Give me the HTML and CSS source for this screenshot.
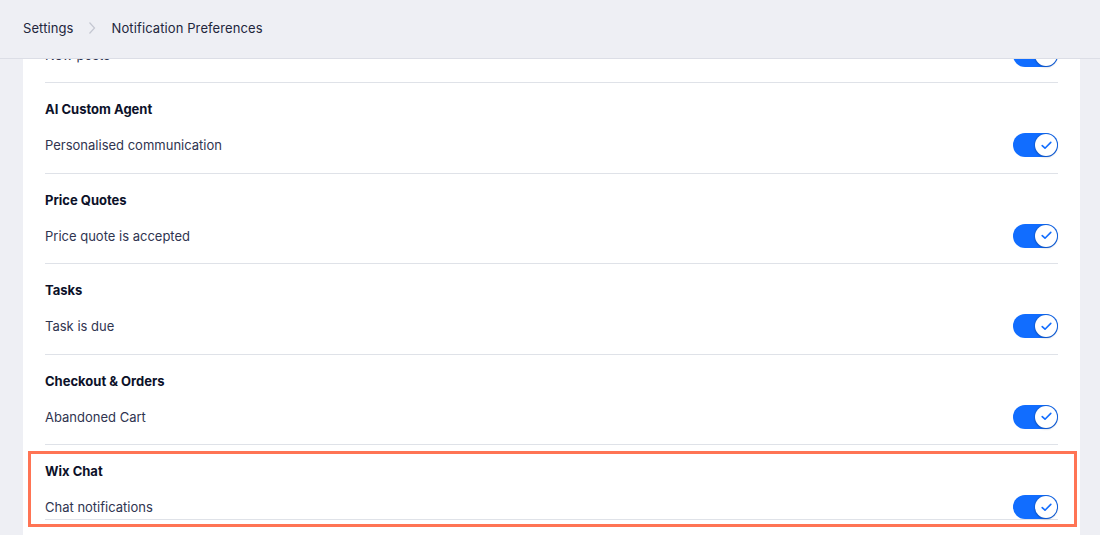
FILE: index.html
```html
<!DOCTYPE html>
<html lang="en">
<head>
<meta charset="utf-8">
<title>Notification Preferences</title>
<link rel="stylesheet" href="styles.css">
</head>
<body>
<header class="header">
  <span class="crumb">Settings</span>
  <svg class="chev" width="8" height="14" viewBox="0 0 8 14"><path d="M1.5 1.5 L6.5 7 L1.5 12.5" fill="none" stroke="#c4c7d1" stroke-width="1.2"/></svg>
  <span class="crumb current">Notification Preferences</span>
</header>
<main class="main">
  <div class="card">
    <div class="list">
      <section class="group">
        <h3 class="title">Blog</h3>
        <div class="row"><span class="label">New posts</span><span class="toggle"><span class="knob"><svg width="11" height="9" viewBox="0 0 11 9"><path d="M1.2 4.6 L4 7.2 L9.8 1.4" fill="none" stroke="#116dff" stroke-width="1.6" stroke-linecap="round" stroke-linejoin="round"/></svg></span></span></div>
      </section>
      <section class="group">
        <h3 class="title">AI Custom Agent</h3>
        <div class="row"><span class="label">Personalised communication</span><span class="toggle"><span class="knob"><svg width="11" height="9" viewBox="0 0 11 9"><path d="M1.2 4.6 L4 7.2 L9.8 1.4" fill="none" stroke="#116dff" stroke-width="1.6" stroke-linecap="round" stroke-linejoin="round"/></svg></span></span></div>
      </section>
      <section class="group">
        <h3 class="title">Price Quotes</h3>
        <div class="row"><span class="label">Price quote is accepted</span><span class="toggle"><span class="knob"><svg width="11" height="9" viewBox="0 0 11 9"><path d="M1.2 4.6 L4 7.2 L9.8 1.4" fill="none" stroke="#116dff" stroke-width="1.6" stroke-linecap="round" stroke-linejoin="round"/></svg></span></span></div>
      </section>
      <section class="group">
        <h3 class="title">Tasks</h3>
        <div class="row"><span class="label">Task is due</span><span class="toggle"><span class="knob"><svg width="11" height="9" viewBox="0 0 11 9"><path d="M1.2 4.6 L4 7.2 L9.8 1.4" fill="none" stroke="#116dff" stroke-width="1.6" stroke-linecap="round" stroke-linejoin="round"/></svg></span></span></div>
      </section>
      <section class="group">
        <h3 class="title">Checkout &amp; Orders</h3>
        <div class="row"><span class="label">Abandoned Cart</span><span class="toggle"><span class="knob"><svg width="11" height="9" viewBox="0 0 11 9"><path d="M1.2 4.6 L4 7.2 L9.8 1.4" fill="none" stroke="#116dff" stroke-width="1.6" stroke-linecap="round" stroke-linejoin="round"/></svg></span></span></div>
      </section>
      <section class="group highlighted">
        <h3 class="title">Wix Chat</h3>
        <div class="row"><span class="label">Chat notifications</span><span class="toggle"><span class="knob"><svg width="11" height="9" viewBox="0 0 11 9"><path d="M1.2 4.6 L4 7.2 L9.8 1.4" fill="none" stroke="#116dff" stroke-width="1.6" stroke-linecap="round" stroke-linejoin="round"/></svg></span></span></div>
      </section>
    </div>
  </div>
</main>
</body>
</html>
```
FILE: styles.css
```css
* { box-sizing: border-box; }
html, body { margin: 0; padding: 0; }
body {
  width: 1100px;
  height: 535px;
  overflow: hidden;
  background: #eeeff4;
  font-family: "Inter", "Open Sans", sans-serif;
  color: #20243a;
}
.header {
  position: relative;
  z-index: 2;
  height: 59px;
  display: flex;
  align-items: center;
  padding: 0 0 3px 23px;
  background: #eeeff4;
  border-bottom: 1px solid #dcdee6;
}
.crumb {
  font-size: 13px;
  color: #22263c;
  letter-spacing: 0.1px;
}
.chev { margin: 0 16px 0 14px; }
.main {
  display: flex;
  height: 476px;
  overflow: hidden;
  padding: 0 20px 0 23px;
}
.card {
  flex: 1;
  background: #ffffff;
  padding: 0 22px;
}
.list {
  margin-top: -66.5px;
}
.group {
  padding: 16px 0 15.5px;
  border-bottom: 1px solid #dfe2e8;
}
.title {
  margin: 0 0 14px;
  font-size: 13px;
  line-height: 20px;
  font-weight: 700;
  color: #0c1129;
}
.row {
  display: flex;
  align-items: center;
  justify-content: space-between;
  height: 24px;
}
.label {
  font-size: 13px;
  color: #2f3450;
}
.toggle {
  width: 45px;
  height: 24px;
  border-radius: 12px;
  background: #116dff;
  display: flex;
  align-items: center;
  justify-content: flex-end;
  padding-right: 1px;
}
.knob {
  width: 22px;
  height: 22px;
  border-radius: 50%;
  background: #ffffff;
  display: flex;
  align-items: center;
  justify-content: center;
  box-shadow: 0 0 0 1px rgba(17, 90, 200, 0.55), 0 1px 2px rgba(10, 20, 60, 0.35);
}
.highlighted {
  position: relative;
  padding-bottom: 0;
}
.highlighted::after {
  content: "";
  position: absolute;
  left: -17px;
  right: -19px;
  top: 6px;
  bottom: -8px;
  border: 3px solid #ff7454;
  pointer-events: none;
}
```
